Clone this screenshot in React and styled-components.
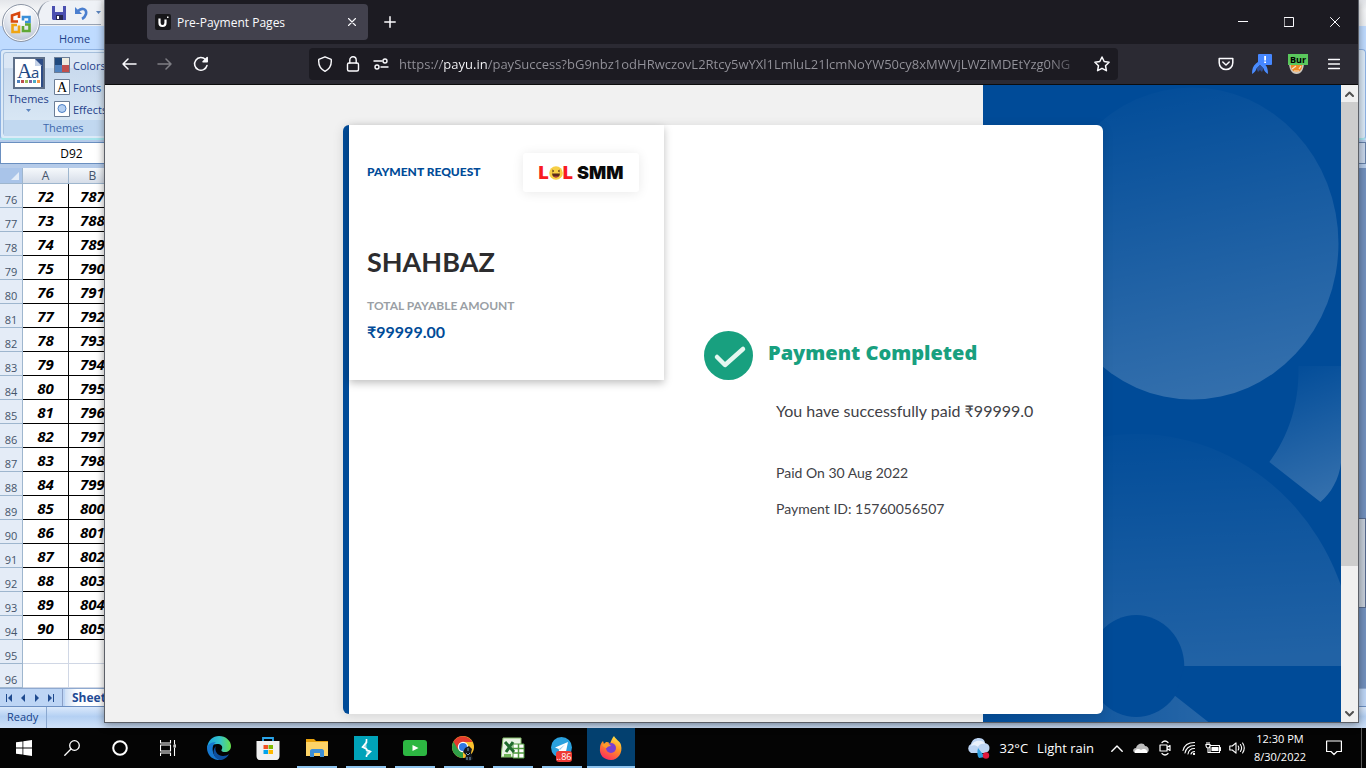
import React from 'react';
import styled, { createGlobalStyle, css } from 'styled-components';

const ui = '"Open Sans", "Noto Sans", sans-serif';
const brand = 'Lato, "Open Sans", sans-serif';

const GlobalStyle = createGlobalStyle`
  *, *::before, *::after { box-sizing: border-box; }
  body { margin: 0; font-family: ${ui}; font-size: 12px; background: #000; }
  button { border: 0; padding: 0; margin: 0; background: none; color: inherit; font: inherit; }
  h1, h2, p, dl, dd, dt { margin: 0; font-weight: inherit; }
  svg { display: block; flex: none; }
`;

const Desktop = styled.div`
  position: relative;
  display: flex;
  flex-direction: column;
  min-height: 100vh;
  overflow: hidden;
`;

/* ---------- Spreadsheet window ---------- */

const Excel = styled.section`
  flex: 1;
  display: flex;
  flex-direction: column;
  background: #bfdbff;
  color: #1e3f8a;
  font-size: 11px;
`;

const QuickBar = styled.div`
  display: flex;
  align-items: center;
  justify-content: space-between;
  height: 26px;
  background: linear-gradient(#e4e6ea, #f4f5f7 40%, #eef0f3);
`;

const QuickTools = styled.div`
  display: flex;
  align-items: center;
  gap: 8px;
  height: 24px;
  margin-left: 36px;
  padding-left: 14px;
  border-bottom: 1px solid #9aa4b4;
  border-left: 2px solid #8d96a5;
  border-top-left-radius: 14px 22px;
  background: #eef1f6;
`;

const Orb = styled.button`
  position: absolute;
  left: 2px;
  top: 4px;
  width: 38px;
  height: 38px;
  display: grid;
  place-items: center;
  border: 1px solid #8c95a5;
  border-radius: 50%;
  background: radial-gradient(circle at 50% 25%, #fdfdfe 20%, #d5dbe6 60%, #a9b3c4);
  box-shadow: inset 0 0 0 1px #fff;
`;

const RibbonTabs = styled.nav`
  height: 23px;
  padding: 4px 0 0 51px;
  button { padding: 0 8px; line-height: 17px; }
`;

const Ribbon = styled.div`
  display: flex;
  height: 91px;
  padding: 2px;
  border: 1px solid #8db2e3;
  border-bottom: 2px solid #a6e4ec;
  border-radius: 4px;
  background: #dceaf8;
`;

const RibbonGroup = styled.div`
  display: flex;
  flex-direction: column;
  width: 160px;
  border: 1px solid #a5bfdc;
  border-radius: 3px;
  background: linear-gradient(#dbe7f5 18%, #c9daee 19%, #dceaf6);
`;

const GroupTools = styled.div`
  flex: 1;
  display: flex;
  gap: 5px;
  padding: 1px 0 0 4px;
`;

const ThemesButton = styled.button`
  display: flex;
  flex-direction: column;
  align-items: center;
  width: 41px;
  padding-top: 3px;
  line-height: 16px;
  svg + span { margin: 2px 0; }
`;

const ThemeList = styled.div`
  display: flex;
  flex-direction: column;
  button {
    display: flex;
    align-items: center;
    gap: 3px;
    height: 22px;
  }
`;

const GroupName = styled.div`
  height: 16px;
  padding-left: 39px;
  line-height: 16px;
  color: #3f68ad;
  background: #c1d8f0;
`;

const FormulaBar = styled.div`
  display: flex;
  justify-content: space-between;
  height: 28px;
  padding: 2px 0 4px;
  background: #b5cbe9;
`;

const NameBox = styled.input`
  width: 142px;
  height: 22px;
  padding: 0;
  border: 1px solid #6a8fc0;
  border-width: 1px 0 1px 1px;
  background: #fff;
  color: #000;
  font: 12px/20px ${ui};
  text-align: center;
`;

const ExpandStub = styled.div`
  width: 14px;
  border: 1px solid #6580a8;
  background: #c8d6ea;
`;

const SheetArea = styled.div`
  flex: 1;
  display: flex;
  justify-content: space-between;
  align-items: stretch;
  background: #fff;
`;

const Grid = styled.table`
  width: 117px;
  height: 520px;
  table-layout: fixed;
  border-collapse: separate;
  border-spacing: 0;
  thead th {
    height: 16px;
    padding: 0;
    border-right: 1px solid #9eb6ce;
    border-bottom: 1px solid #9eb6ce;
    background: linear-gradient(#f6f9fc, #d6dde8);
    color: #44546a;
    font: 12px/14px ${ui};
  }
  thead th:first-child { padding-left: 11px; background: #a9c4e9; }
`;

const RowHead = styled.th`
  height: 24px;
  padding: 0;
  border-right: 1px solid #9eb6ce;
  border-bottom: 1px solid #9eb6ce;
  background: #e4ecf7;
  color: #44546a;
  font: 11px/14px ${ui};
  vertical-align: bottom;
`;

const Cell = styled.td`
  height: 24px;
  padding: 0;
  border-right: 1px solid ${(p) => (p.$filled ? '#000' : '#d0d7e5')};
  border-bottom: 1px solid ${(p) => (p.$filled ? '#000' : '#d0d7e5')};
  color: #000;
  font: italic bold 15px/22px ${ui};
  text-align: center;
`;

const SheetScroll = styled.div`
  width: 16px;
  padding-top: 350px;
  background: #7290bd;
  &::after {
    content: '';
    display: block;
    height: 90px;
    border: 1px solid #55698c;
    background: #c5ced9;
  }
`;

const SheetTabs = styled.div`
  display: flex;
  align-items: stretch;
  height: 19px;
  background: #bdd5f5;
  border-top: 1px solid #8ea9d0;
  border-bottom: 1px solid #6c8fc2;
`;

const TabArrows = styled.div`
  display: flex;
  align-items: center;
  gap: 4px;
  width: 63px;
  padding-left: 4px;
  border-right: 1px solid #8a9fc6;
`;

const SheetTab = styled.button`
  margin-left: 2px;
  padding: 0 8px 0 7px;
  background: linear-gradient(90deg, #cfe0f6, #fff 12px);
  color: #1f4c96;
  font: bold 12px/17px ${ui};
`;

const StatusBar = styled.footer`
  display: flex;
  height: 21px;
  background: linear-gradient(#dbe9fb, #b4d0f3 45%, #cfe1f8);
  color: #15428b;
  line-height: 19px;
  span { width: 47px; padding-left: 7px; border-right: 1px solid #8aa8d0; }
`;

/* ---------- Browser window ---------- */

const Browser = styled.main`
  position: absolute;
  top: 0;
  left: 104px;
  right: 7px;
  bottom: 45px;
  display: flex;
  flex-direction: column;
  border: 1px solid #5c6068;
  border-top: 0;
  background: #1c1b22;
  color: #fbfbfe;
  box-shadow: 0 2px 8px rgba(0, 0, 0, 0.4);
`;

const TabStrip = styled.div`
  display: flex;
  align-items: center;
  height: 44px;
  padding-left: 42px;
`;

const Tab = styled.div`
  display: flex;
  align-items: center;
  gap: 6px;
  width: 221px;
  height: 36px;
  padding: 0 8px;
  border-radius: 4px;
  background: #42414d;
  line-height: 18px;
  span { flex: 1; padding-top: 2px; }
`;

const IconButton = styled.button`
  display: grid;
  place-items: center;
  width: ${(p) => p.$w || 36}px;
  height: 32px;
  ${(p) => p.$dim && css`opacity: 0.4;`}
`;

const TabClose = styled.button`
  display: grid;
  place-items: center;
  width: 16px;
  height: 24px;
`;

const NewTab = styled(IconButton)`
  margin-left: 4px;
`;

const WindowControls = styled.div`
  display: flex;
  margin-left: auto;
`;

const NavBar = styled.div`
  display: flex;
  align-items: center;
  height: 41px;
  padding: 0 6px;
  border-bottom: 1px solid #0c0c0d;
  background: #2b2a33;
`;

const AddressBar = styled.div`
  display: flex;
  align-items: center;
  flex: 1;
  height: 32px;
  margin: 0 90px;
  padding: 0 2px;
  border-radius: 4px;
  background: #1c1b22;
`;

const AddressInput = styled.input`
  flex: 1;
  min-width: 0;
  height: 28px;
  margin-left: 4px;
  padding: 0;
  border: 0;
  background: linear-gradient(90deg, #94939b 43px, #fbfbfe 43px 89px, #94939b 89px calc(100% - 40px), transparent);
  background-clip: text;
  -webkit-background-clip: text;
  color: transparent;
  font: 13px/28px ${ui};
`;

const Viewport = styled.div`
  flex: 1;
  display: flex;
`;

const Page = styled.div`
  flex: 1;
  display: grid;
  grid-template: 1fr / 71fr 29fr;
  background: #f1f1f1;
`;

const Art = styled.svg`
  grid-area: 1 / 2;
  width: 100%;
  height: 100%;
  min-height: 0;
  contain: size;
`;

const Card = styled.article`
  grid-area: 1 / 1 / 2 / 3;
  z-index: 1;
  display: flex;
  justify-self: center;
  width: 760px;
  max-width: 100%;
  margin: 40px 0 8px;
  border-left: 6px solid #004b98;
  border-radius: 6px;
  background: #fff;
  box-shadow: 0 2px 12px rgba(0, 0, 0, 0.12);
  font-family: ${brand};
`;

const Summary = styled.section`
  align-self: flex-start;
  width: 315px;
  height: 255px;
  padding: 28px 25px 0 18px;
  box-shadow: 0 3px 8px rgba(0, 0, 0, 0.25);
`;

const SummaryHead = styled.header`
  display: flex;
  align-items: center;
  justify-content: space-between;
  h1 { padding-bottom: 2px; color: #004b98; font-size: 12px; font-weight: 900; line-height: 20px; }
`;

const Merchant = styled.div`
  display: flex;
  align-items: center;
  justify-content: center;
  width: 116px;
  height: 39px;
  border-radius: 3px;
  box-shadow: 0 1px 12px rgba(0, 0, 0, 0.09);
  color: #0a0a0a;
  font: 900 18px/20px Inter, sans-serif;
  b { color: #f81b22; font-weight: 900; }
  span { margin-left: 4px; }
`;

const Payer = styled.h2`
  margin-top: 53px;
  color: #2c2c2e;
  font-size: 27px;
  font-weight: 700;
  line-height: 34px;
`;

const Amount = styled.dl`
  margin-top: 17px;
  dt { color: #9a9fa5; font-size: 12px; font-weight: 700; line-height: 20px; }
  dd { margin-top: 4px; color: #004b98; font-size: 16px; font-weight: 700; line-height: 24px; }
`;

const Result = styled.section`
  flex: 1;
  padding: 206px 0 0 40px;
`;

const ResultHead = styled.header`
  display: flex;
  align-items: center;
  gap: 15px;
  h2 {
    padding-bottom: 6px;
    color: #18a07f;
    font: 800 20px/26px ${ui};
  }
`;

const Details = styled.div`
  margin: 19px 0 0 72px;
  color: #414146;
  font-size: 14px;
  line-height: 36px;
`;

const Lead = styled.p`
  && { margin-bottom: 32px; }
  font-size: 16px;
  line-height: 24px;
`;

const Scrollbar = styled.div`
  display: flex;
  flex-direction: column;
  width: 17px;
  background: #f0f0f0;
  color: #505050;
  button { display: grid; place-items: center; height: 17px; }
`;

const Thumb = styled.div`
  flex: 464 1 0;
  background: #cdcdcd;
`;

const Track = styled.div`
  flex: 139 1 0;
`;

/* ---------- Taskbar ---------- */

const Taskbar = styled.footer`
  display: flex;
  justify-content: space-between;
  height: 40px;
  background: #040404;
  color: #fff;
`;

const Launchers = styled.div`
  display: flex;
  gap: ${(p) => p.$gap || 0}px;
`;

const TaskButton = styled.button`
  position: relative;
  display: grid;
  place-items: center;
  width: 48px;
  height: 40px;
  background: ${(p) => (p.$active ? '#03406f' : 'none')};
  ${(p) => p.$open && css`
    &::after {
      content: '';
      position: absolute;
      left: ${p.$active ? 0 : 4}px;
      right: ${p.$active ? 0 : 4}px;
      bottom: 0;
      height: 2px;
      background: #8ec4ef;
    }
  `}
`;

const UnreadBadge = styled.span`
  position: absolute;
  left: 18px;
  bottom: 6px;
  width: 16px;
  border-radius: 3px;
  background: #ee3a35;
  font-size: 9px;
  line-height: 11px;
`;

const Tray = styled.div`
  display: flex;
  align-items: center;
`;

const Weather = styled.button`
  display: flex;
  align-items: center;
  gap: 9px;
  margin-right: 11px;
  font-size: 13px;
`;

const TrayButton = styled.button`
  display: grid;
  place-items: center;
  width: ${(p) => p.$w || 24}px;
  height: 40px;
`;

const Clock = styled.button`
  display: flex;
  flex-direction: column;
  align-items: center;
  width: 62px;
  line-height: 18px;
  font-size: 11px;
  white-space: nowrap;
`;

const ShowDesktop = styled.button`
  width: 5px;
  height: 40px;
  margin-left: 5px;
  border-left: 1px solid #5a5a5a;
`;

/* ---------- Drawings ---------- */

const Line = ({ s = 16, w, h, sw = 1.4, children, ...rest }) => (
  <svg width={w || s} height={h || s} viewBox={`0 0 ${w || s} ${h || s}`} fill="none" stroke="currentColor"
    strokeWidth={sw} strokeLinecap="round" strokeLinejoin="round" aria-hidden="true" {...rest}>{children}</svg>
);

const OfficeLogo = () => (
  <svg width="24" height="24" viewBox="0 0 24 24" fill="none" strokeWidth="2.6">
    <path d="M9 10.500H3V4.500l7-2.500v5" stroke="#d8480f" />
    <path d="M14 9.500V6h6.500v5H16" stroke="#3a8fd8" />
    <path d="M10 14.500v6.500H3.500v-7H8" stroke="#f0a512" />
    <path d="M14 15v5h6.500v-6.500H16" stroke="#5fa833" />
  </svg>
);

const SaveIcon = () => (
  <svg width="14" height="14" viewBox="0 0 14 14">
    <path d="M0 0h14v14H1l-1-1z" fill="#4a4fb0" />
    <path d="M3 0h8v6H3z" fill="#e9edf7" /><path d="M4 9h7v5H4z" fill="#25264f" /><path d="M5 10h2v3H5z" fill="#fff" />
  </svg>
);

const UndoIcon = () => (
  <svg width="14" height="14" viewBox="0 0 14 14">
    <path d="M4 5c4-4 9-2 8 3-1 3-2 4-4 5" fill="none" stroke="#4b7fcf" strokeWidth="2.600" />
    <path d="M1 1v7h7z" fill="#4b7fcf" />
  </svg>
);

const DownMark = ({ c = '#5a83bd' }) => (
  <svg width="5" height="3" viewBox="0 0 5 3"><path d="M0 0h5L2.500 3z" fill={c} /></svg>
);

const ThemesIcon = () => (
  <svg width="32" height="32" viewBox="0 0 32 32">
    <path d="M1 1h30v30H1z" fill="#fff" stroke="#5e6f88" strokeWidth="2" />
    <path d="M22 2h8v28h-2V9h-6z" fill="#2d4c86" /><path d="M22 2v7h7z" fill="#c4d2e8" />
    <text x="4" y="21" fill="#1f4a85" fontSize="21" fontFamily="Liberation Serif, serif">A</text>
    <text x="18" y="21" fill="#1f4a85" fontSize="15" fontFamily="Open Sans, sans-serif">a</text>
    {['#4f81bd', '#c0504d', '#9bbb59', '#8064a2', '#4bacc6', '#f79646'].map((c, i) => (
      <rect key={c} x={4 + i * 4} y="23" width="3" height="3" fill={c} />
    ))}
  </svg>
);

const ColorsIcon = () => (
  <svg width="16" height="16" viewBox="0 0 16 16">
    <path d="M0 0h16v16H0z" fill="#6b7d96" />
    <path d="M1 1h7v7H1z" fill="#1f497d" /><path d="M8 1h7v7H8z" fill="#eeece1" />
    <path d="M1 8h7v7H1z" fill="#4f81bd" /><path d="M8 8h7v7H8z" fill="#c0504d" />
  </svg>
);

const FontsIcon = () => (
  <svg width="16" height="16" viewBox="0 0 16 16">
    <path d="M.5.5h15v15H.5z" fill="#fff" stroke="#6b7d96" />
    <text x="3" y="13" fontSize="14" fontFamily="Liberation Serif, serif" fill="#000">A</text>
  </svg>
);

const EffectsIcon = () => (
  <svg width="16" height="16" viewBox="0 0 16 16">
    <path d="M.5.5h15v15H.5z" fill="#fff" stroke="#6b7d96" />
    <circle cx="8" cy="7.500" r="4" fill="#b5d0f3" stroke="#4d7fc4" />
  </svg>
);

const CornerMark = () => (
  <svg width="8" height="8" viewBox="0 0 8 8"><path d="M8 0v8H0z" fill="#e3ecf8" /></svg>
);

const Arrow = ({ flip, bar }) => (
  <svg width="10" height="8" viewBox="0 0 10 8" transform={flip ? 'scale(-1 1)' : undefined}>
    <path d={bar ? 'M8 0v8L4 4z' : 'M7 0v8L3 4z'} fill="#1e4a8f" />{bar && <path d="M2 0h1v8H2z" fill="#1e4a8f" />}
  </svg>
);

const PayuFavicon = () => (
  <svg width="16" height="16" viewBox="0 0 16 16">
    <rect width="16" height="16" rx="2" fill="#17171a" />
    <path d="M4.500 4.500v4.200c0 2.400 1.200 3.300 3 3.300s3-.9 3-3.300V5.500" fill="none" stroke="#fff" strokeWidth="2.200" />
    <path d="M12 2.500h1.500V4H12z" fill="#fff" />
  </svg>
);

const MalwareIcon = () => (
  <svg width="20" height="20" viewBox="0 0 20 20">
    <path d="M0 20c0-5 1-8 4-10.500C6 8 7 7 8 6c1 1 2 2 4 3.500C15 12 16 15 16 20c-2-1-4-3-4.500-5.500L8 11l-3.500 3.500C4 17 2 19 0 20z" fill="#4a8cff" />
    <path d="M8 11l-3.500 3.500L6 18l2-2 2 2 1.500-3.500z" fill="#2f4f96" />
    <rect x="6" width="14" height="11" rx="1" fill="#4687ff" />
    <path d="M12.200 2h1.800v4.500h-1.800zM12.200 7.500h1.800v1.500h-1.800z" fill="#fff" />
  </svg>
);

const FoxIcon = () => (
  <svg width="20" height="20" viewBox="0 0 20 20">
    <path d="M1 8h15c0 8-3 12-7.500 12S1 16 1 8z" fill="#cfc8be" />
    <path d="M3 9h11c1 6-2 9-5.500 9S2 15 3 9z" fill="#f08a24" />
    <path d="M4 15l4-3M13 12l-2 3M6 17h5" fill="none" stroke="#fbe3c4" strokeWidth="1.200" />
    <rect width="20" height="11" fill="#5ac75c" />
    <text x="2" y="9" fontSize="9" fontWeight="700" fontFamily="Open Sans, sans-serif" fill="#000">Bur</text>
  </svg>
);

const BackgroundArt = () => (
  <Art viewBox="0 0 358 637" preserveAspectRatio="none" aria-hidden="true">
    <defs>
      <linearGradient id="fade" x1="0.300" y1="0" x2="0.500" y2="1">
        <stop offset="0" stopColor="#fff" stopOpacity="0.01" /><stop offset="1" stopColor="#fff" stopOpacity="0.2" />
      </linearGradient>
      <linearGradient id="dome" x1="0.400" y1="0" x2="0.500" y2="1">
        <stop offset="0" stopColor="#fff" stopOpacity="0.01" /><stop offset="1" stopColor="#fff" stopOpacity="0.13" />
      </linearGradient>
      <linearGradient id="base" x1="0" x2="1">
        <stop offset="0" stopColor="#fff" stopOpacity="0.01" /><stop offset="1" stopColor="#fff" stopOpacity="0.15" />
      </linearGradient>
    </defs>
    <path d="M0 0h358v637H0z" fill="#004b98" />
    <ellipse cx="209" cy="158.500" rx="146" ry="156" fill="url(#fade)" />
    <path d="M315 281h43v89c0 20-9 37-21 47l-51-40c20-27 30-60 29-96z" fill="url(#fade)" />
    <path d="M-65 581a218 232 0 0 1 436 0z" fill="url(#dome)" />
    <path d="M0 600h180l12 11 33 26H0z" fill="url(#base)" />
    <path d="M105 581h95l-8 30z" fill="#004b98" />
    <ellipse cx="153" cy="581" rx="48" ry="51" fill="#004b98" />
    <path d="M201 581h157v30H192z" fill="#004b98" />
  </Art>
);

const CheckBadge = () => (
  <svg width="49" height="49" viewBox="0 0 49 49" role="img" aria-label="Success">
    <circle cx="24.500" cy="24.500" r="24.500" fill="#18a07f" />
    <path d="M13 26l8 8 18-16" fill="none" stroke="#e4f7f0" strokeWidth="4.500" strokeLinecap="round" strokeLinejoin="round" />
  </svg>
);

const LaughIcon = () => (
  <svg width="14" height="14" viewBox="0 0 14 14">
    <circle cx="7" cy="7" r="6.800" fill="#f7cf45" />
    <path d="M3 7.500h8c0 2.500-2 4-4 4s-4-1.500-4-4z" fill="#5a2b1b" /><path d="M4.500 10.500h5l-2.500 1z" fill="#ed4260" />
    <path d="M3 4l2 1-2 1M11 4L9 5l2 1" fill="none" stroke="#5a3b1b" strokeWidth=".8" />
  </svg>
);

const WindowsIcon = () => (
  <svg width="16" height="16" viewBox="0 0 16 16" fill="#fff">
    <path d="M0 2.300l6.500-.9v6.200H0zM7.300 1.300L16 0v7.600H7.300zM0 8.400h6.500v6.200L0 13.700zM7.300 8.400H16V16l-8.700-1.300z" />
  </svg>
);

const EdgeIcon = () => (
  <svg width="24" height="24" viewBox="0 0 24 24">
    <defs>
      <linearGradient id="edgeTop" x1="0" x2="1"><stop offset="0" stopColor="#1ba4e2" /><stop offset=".55" stopColor="#36c5c8" /><stop offset="1" stopColor="#66e04a" /></linearGradient>
    </defs>
    <path d="M0 12C1 4 6 0 12 0c7 0 12 5 12 10 0 4-3 6-6 6-4 0-4-2-3-3 1-3-1-5-5-5-5 0-8 3-10 4z" fill="url(#edgeTop)" />
    <path d="M0 12c0-3 4-6 9-6-3 2-4 6-3 10 1 4 4 7 8 8C6 25 0 19 0 12z" fill="#1779d0" />
    <path d="M9 10c-2 4 1 10 7 10 2 0 5-1 6-2-2 4-6 6-9 6-6-1-9-9-4-14z" fill="#0d4f9e" />
  </svg>
);

const StoreIcon = () => (
  <svg width="24" height="24" viewBox="0 0 24 24">
    <path d="M7 6V2h10v4" fill="none" stroke="#2aa5ea" strokeWidth="1.800" />
    <path d="M.5 5h23v15c0 2-1 4-3 4h-17c-2 0-3-2-3-4z" fill="#f1f1f1" />
    <path d="M7.500 9H12v4H7.500z" fill="#f25022" /><path d="M12.500 9H17v4h-4.500z" fill="#7fba00" />
    <path d="M7.500 14H12v4H7.500z" fill="#00a4ef" /><path d="M12.500 14H17v4h-4.500z" fill="#ffb900" />
  </svg>
);

const FolderIcon = () => (
  <svg width="22" height="18" viewBox="0 0 22 18">
    <path d="M0 0h8l2 2h12v6H0z" fill="#e8a10c" /><path d="M0 3h22v14H0z" fill="#fdd367" />
    <path d="M4 18v-6c0-1 1-2 2-2h10c1 0 2 1 2 2v6h-4v-4H8v4z" fill="#3d8fd6" />
  </svg>
);

const BoltIcon = () => (
  <svg width="24" height="24" viewBox="0 0 24 24">
    <path d="M0 0h24v24H0z" fill="#00a3b9" />
    <path d="M12.500 3v3.500l-4 4.500 4 2v1l4 1.500-4 4V21" fill="none" stroke="#fff" strokeWidth="1.600" />
    <path d="M12.500 4v8.500L8 11.500zM12.500 20v-7l4 2z" fill="#fff" opacity=".6" />
  </svg>
);

const PlayIcon = () => (
  <svg width="24" height="16" viewBox="0 0 24 16">
    <rect width="24" height="16" rx="3" fill="#2db742" /><path d="M9.500 5l6 3-6 3z" fill="#fff" />
  </svg>
);

const ChromeIcon = () => (
  <svg width="24" height="25" viewBox="0 0 24 25">
    <circle cx="11" cy="11" r="11" fill="#fbc02d" />
    <path d="M11 11L1.500 5.500A11 11 0 0 0 11 22z" fill="#2f9e47" />
    <path d="M1.500 5.500A11 11 0 0 1 20.500 6H11L6 13.500z" fill="#e33b2e" />
    <circle cx="11" cy="11" r="5.200" fill="#fff" /><circle cx="11" cy="11" r="4" fill="#2e78e4" />
    <path d="M13 12l4-2 3 3-1 4 2 6-3 2-5-1 1-5-3-3z" fill="#15181f" />
    <path d="M16 12v3M14 17l2 2 2-2M15 21v3M18 21v3" stroke="#7da6c4" />
  </svg>
);

const ExcelIcon = () => (
  <svg width="24" height="23" viewBox="0 0 24 23">
    <path d="M2 1h18v19H0z" fill="#e9f4e4" stroke="#86bd6c" />
    <path d="M12 7h11v14H12z" fill="#fff" stroke="#4f9a3e" />
    <path d="M12 11.500h11M12 16h11M17.500 7v14" stroke="#4f9a3e" strokeWidth="1.500" />
    <path d="M4 5l9 10M12 5L5 15" stroke="#1f6b2c" strokeWidth="3" />
    <path d="M3 17h7v3H3z" fill="#6fb457" />
  </svg>
);

const TelegramIcon = () => (
  <svg width="22" height="22" viewBox="0 0 22 22">
    <circle cx="10.500" cy="10.500" r="10.500" fill="#2aa1de" /><path d="M4 10.500L17 5l-2.500 12-4-3-2 2-.8-4z" fill="#fff" />
    <path d="M8 12l6-4.500-5 5.500" fill="#9ccdea" />
  </svg>
);

const FirefoxIcon = () => (
  <svg width="24" height="24" viewBox="0 0 24 24">
    <defs>
      <linearGradient id="ff" x1=".8" y1="0" x2=".3" y2="1"><stop offset="0" stopColor="#ffe84a" /><stop offset=".45" stopColor="#ff9424" /><stop offset="1" stopColor="#ff2a5f" /></linearGradient>
    </defs>
    <path d="M15 0c1 3 6 5 7 9 2 8-3 15-10 15S0 19 1 12c0-3 1-5 3-7l1 3 2-2c1 0 3 0 4 2 1-3 2-6 4-8z" fill="url(#ff)" />
    <circle cx="12" cy="12" r="5" fill="#7a3fd0" />
    <path d="M3 9c4-3 7-2 9 1-3 0-4 1-4 2-2 0-4-1-5-3z" fill="#ff9a2a" />
  </svg>
);

const CloudRain = () => (
  <svg width="24" height="21" viewBox="0 0 24 21">
    <path d="M5 15a5 5 0 0 1 0-9c1-4 4-6 8-6 4 0 6 3 6 5 6 1 6 9 0 10z" fill="#bcd4f3" />
    <path d="M5 8c2-6 12-7 14-2-4-1-6 1-7 3-2-2-5-2-7-1z" fill="#e9f1fc" />
    <path d="M12 10l7 9-6 1c-2-2-2-6-1-10z" fill="#2d9fe0" /><circle cx="20" cy="17.500" r="3.200" fill="#e0173c" />
  </svg>
);

const firstRow = 76;
const rows = Array.from({ length: 21 }, (_, i) => ({
  row: firstRow + i,
  a: i < 19 ? 72 + i : '',
  b: i < 19 ? 787 + i : '',
}));

const address = 'https://payu.in/paySuccess?bG9nbz1odHRwczovL2Rtcy5wYXl1LmluL21lcmNoYW50cy8xMWVjLWZiMDEtYzg0NG';

function Spreadsheet() {
  return (
    <Excel aria-label="Spreadsheet">
      <QuickBar>
        <QuickTools><SaveIcon /><UndoIcon /><DownMark /></QuickTools>
        <Orb aria-label="Office menu"><OfficeLogo /></Orb>
      </QuickBar>
      <RibbonTabs><button>Home</button></RibbonTabs>
      <Ribbon>
        <RibbonGroup>
          <GroupTools>
            <ThemesButton><ThemesIcon /><span>Themes</span><DownMark /></ThemesButton>
            <ThemeList>
              <button><ColorsIcon />Colors</button>
              <button><FontsIcon />Fonts</button>
              <button><EffectsIcon />Effects</button>
            </ThemeList>
          </GroupTools>
          <GroupName>Themes</GroupName>
        </RibbonGroup>
      </Ribbon>
      <FormulaBar><NameBox aria-label="Name box" defaultValue="D92" /><ExpandStub /></FormulaBar>
      <SheetArea>
        <Grid>
          <colgroup><col width="23" /><col width="46" /><col width="48" /></colgroup>
          <thead><tr><th aria-label="Select all"><CornerMark /></th><th>A</th><th>B</th></tr></thead>
          <tbody>
            {rows.map(({ row, a, b }) => (
              <tr key={row}>
                <RowHead scope="row">{row}</RowHead>
                <Cell $filled={!!a}>{a}</Cell>
                <Cell $filled={!!b}>{b}</Cell>
              </tr>
            ))}
          </tbody>
        </Grid>
        <SheetScroll />
      </SheetArea>
      <SheetTabs>
        <TabArrows><Arrow bar /><Arrow /><Arrow flip /><Arrow bar flip /></TabArrows>
        <SheetTab>Sheet1</SheetTab>
      </SheetTabs>
      <StatusBar><span>Ready</span></StatusBar>
    </Excel>
  );
}

function PaymentPage() {
  return (
    <Page>
      <BackgroundArt />
      <Card>
        <Summary>
          <SummaryHead>
            <h1>PAYMENT REQUEST</h1>
            <Merchant><b>L</b><LaughIcon /><b>L</b><span>SMM</span></Merchant>
          </SummaryHead>
          <Payer>SHAHBAZ</Payer>
          <Amount><dt>TOTAL PAYABLE AMOUNT</dt><dd>₹99999.00</dd></Amount>
        </Summary>
        <Result>
          <ResultHead><CheckBadge /><h2>Payment Completed</h2></ResultHead>
          <Details>
            <Lead>You have successfully paid ₹99999.0</Lead>
            <p>Paid On 30 Aug 2022</p>
            <p>Payment ID: 15760056507</p>
          </Details>
        </Result>
      </Card>
    </Page>
  );
}

function BrowserWindow() {
  return (
    <Browser>
      <TabStrip>
        <Tab>
          <PayuFavicon />
          <span>Pre-Payment Pages</span>
          <TabClose aria-label="Close tab"><Line s={8} sw={1.1}><path d="M.5.5l7 7M7.500.5l-7 7" /></Line></TabClose>
        </Tab>
        <NewTab aria-label="New tab"><Line s={12} sw={1.5}><path d="M6 .8v10.400M.8 6h10.400" /></Line></NewTab>
        <WindowControls>
          <IconButton $w={46} aria-label="Minimize"><Line s={10} sw={1}><path d="M0 4.500h10" /></Line></IconButton>
          <IconButton $w={46} aria-label="Maximize"><Line s={10} sw={1}><path d="M.5.5h9v9h-9z" /></Line></IconButton>
          <IconButton $w={46} aria-label="Close"><Line s={10} sw={1}><path d="M.5.5l9 9M9.500.5l-9 9" /></Line></IconButton>
        </WindowControls>
      </TabStrip>
      <NavBar>
        <IconButton aria-label="Back"><Line sw={1.5}><path d="M15 8H2M7 3L2 8l5 5" /></Line></IconButton>
        <IconButton $dim aria-label="Forward"><Line sw={1.5}><path d="M1 8h13M9 3l5 5-5 5" /></Line></IconButton>
        <IconButton aria-label="Reload"><Line sw={1.5}><path d="M14 9.500A6.300 6.300 0 1 1 12.500 3.600l1.500 1.400" /><path d="M14.200 1.500v4.200H10z" fill="currentColor" /></Line></IconButton>
        <AddressBar>
          <IconButton $w={28} aria-label="Protections"><Line><path d="M8 .8l6.200 2.600c.6 5.200-1.200 9.400-6.200 11.900C3 12.800 1.200 8.600 1.800 3.400z" /></Line></IconButton>
          <IconButton $w={28} aria-label="Connection secure"><Line><rect x="2.500" y="7" width="11" height="8" rx="1.500" /><path d="M4.800 7V4a3.200 3.200 0 0 1 6.400 0v3" /></Line></IconButton>
          <IconButton $w={28} aria-label="Permissions"><Line><path d="M1 5h8M8 11h7" /><circle cx="12" cy="5" r="2" /><circle cx="4" cy="11" r="2" /></Line></IconButton>
          <AddressInput aria-label="Address" defaultValue={address} />
          <IconButton $w={28} aria-label="Bookmark"><Line sw={1.5}><path d="M8 1l2.200 4.500 4.900.7-3.600 3.500.9 5L8 12.300l-4.400 2.400.9-5L.9 6.200l4.900-.7z" /></Line></IconButton>
        </AddressBar>
        <IconButton aria-label="Pocket"><Line sw={1.5}><path d="M1.200 2.500h13.600v4.300a6.800 6.800 0 0 1-13.600 0zM4.800 6L8 9l3.200-3" /></Line></IconButton>
        <IconButton aria-label="Extension alerts"><MalwareIcon /></IconButton>
        <IconButton aria-label="Proxy switcher"><FoxIcon /></IconButton>
        <IconButton aria-label="Menu"><Line s={12} sw={1.5}><path d="M.5 1.500h11M.5 6h11M.5 10.500h11" /></Line></IconButton>
      </NavBar>
      <Viewport>
        <PaymentPage />
        <Scrollbar>
          <button aria-label="Scroll up"><Line w={9} h={6} sw={2}><path d="M1 5l3.500-3.500L8 5" /></Line></button>
          <Thumb /><Track />
          <button aria-label="Scroll down"><Line w={9} h={6} sw={2}><path d="M1 1l3.500 3.500L8 1" /></Line></button>
        </Scrollbar>
      </Viewport>
    </Browser>
  );
}

function SystemBar() {
  return (
    <Taskbar>
      <Launchers $gap={3}>
        <Launchers>
          <TaskButton aria-label="Start"><WindowsIcon /></TaskButton>
          <TaskButton aria-label="Search"><Line sw={1.3}><circle cx="10.500" cy="5.500" r="4.800" /><path d="M7 9L.8 15.200" /></Line></TaskButton>
          <TaskButton aria-label="Cortana"><Line sw={2}><circle cx="8" cy="8" r="6.800" /></Line></TaskButton>
          <TaskButton aria-label="Task view"><Line sw={1.1}><path d="M.5 0v3h10V0M.5 16v-3h10v3M.5 5h10v6H.5zM14.500 0v4M14.500 8v8" /><path d="M14 5h2v2h-2z" /></Line></TaskButton>
        </Launchers>
        <Launchers $gap={1}>
          <TaskButton aria-label="Edge"><EdgeIcon /></TaskButton>
          <TaskButton aria-label="Store"><StoreIcon /></TaskButton>
          <TaskButton $open aria-label="Files"><FolderIcon /></TaskButton>
          <TaskButton $open aria-label="Switcher"><BoltIcon /></TaskButton>
          <TaskButton $open aria-label="Player"><PlayIcon /></TaskButton>
          <TaskButton $open aria-label="Chrome"><ChromeIcon /></TaskButton>
          <TaskButton $open aria-label="Excel"><ExcelIcon /></TaskButton>
          <TaskButton $open aria-label="Telegram"><TelegramIcon /><UnreadBadge>..86</UnreadBadge></TaskButton>
          <TaskButton $open $active aria-label="Firefox"><FirefoxIcon /></TaskButton>
        </Launchers>
      </Launchers>
      <Tray>
        <Weather><CloudRain /><span>32°C</span><span>Light rain</span></Weather>
        <TrayButton aria-label="Hidden icons"><Line w={12} h={7} sw={1.4}><path d="M.8 6.200L6 1l5.200 5.200" /></Line></TrayButton>
        <TrayButton aria-label="OneDrive">
          <svg width="16" height="11" viewBox="0 0 16 11"><path d="M2 10C-1 8 0 5 3 5c1-5 8-6 9-2 4 0 5 5 2 7z" fill="#bdbdbd" /><path d="M2 10c-1-4 4-5 6-3 2-2 7-1 6 3z" fill="#fff" /></svg>
        </TrayButton>
        <TrayButton aria-label="Meet now"><Line w={12} h={16} sw={1.2}><path d="M1 5h7v6H1zM8 7.500l3-2v5l-3-2M3 2.500c2-2 4-2 6 0M3 13.500c2 2 4 2 6 0" /></Line></TrayButton>
        <TrayButton aria-label="Network"><Line w={14} h={14} sw={1.1}><path d="M1 9.500C2 5 6 1.500 12.500 1.500M3 12c.5-4 4-7.500 9.500-7.500M6 13c.5-3 3-5.500 6.500-5.500M9 13c.5-1.500 2-2.500 3.500-2.500" /><circle cx="12" cy="13" r=".6" /></Line></TrayButton>
        <TrayButton aria-label="Battery"><Line w={16} h={12} sw={1.1}><path d="M5 3.500h9.500v7H5zM2 0v2M4 0v2M.8 2.500h4.400C5 5 4.500 6 3 6s-2-1-2.200-3.500zM3 6v4.500h2M15.500 5.500v3" /><path d="M7 5.500h6v3H7z" fill="currentColor" /></Line></TrayButton>
        <TrayButton aria-label="Volume"><Line w={16} h={14} sw={1.1}><path d="M.8 5h2.500L7 1.800v10.400L3.300 9H.8zM9.200 5c.8 1.300.8 2.700 0 4M11.400 3.500c1.600 2.300 1.600 4.700 0 7M13.600 2c2.200 3.300 2.200 6.700 0 10" /></Line></TrayButton>
        <Clock><span>12:30 PM</span><span>8/30/2022</span></Clock>
        <TrayButton $w={45} aria-label="Notifications"><Line w={16} h={16} sw={1.2}><path d="M.6 1h14.800v10.500H11L8 14.500l-3-3H.6z" /></Line></TrayButton>
        <ShowDesktop aria-label="Show desktop" />
      </Tray>
    </Taskbar>
  );
}

export default function App() {
  return (
    <>
      <GlobalStyle />
      <Desktop>
        <Spreadsheet />
        <BrowserWindow />
        <SystemBar />
      </Desktop>
    </>
  );
}
